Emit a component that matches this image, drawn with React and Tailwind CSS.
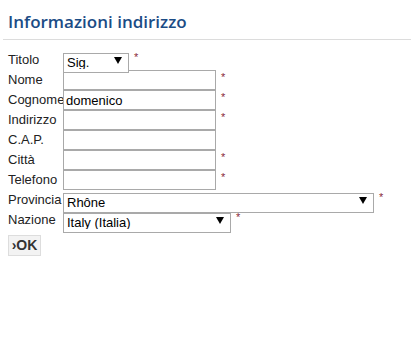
import { useState } from "react";

const inputCls =
  "h-5 w-[153px] border border-[#a9a9a9] bg-white px-[2px] text-[13px] text-black outline-none";

function Star() {
  return (
    <span className="ml-[5px] self-start pt-[2px] text-[11px] leading-none text-[#8a2a3a]">
      *
    </span>
  );
}

function Arrow() {
  return (
    <svg
      width="8"
      height="7"
      viewBox="0 0 8 7"
      className="pointer-events-none absolute right-[7px] top-[7px]"
    >
      <path d="M0 0H8L4 7Z" fill="#000" />
    </svg>
  );
}

function SelectBox({ width, value }) {
  return (
    <div className={`relative h-5 ${width}`}>
      <select
        defaultValue={value}
        className="h-5 w-full appearance-none border border-[#a9a9a9] bg-white pb-[1px] pl-[3px] text-[13px] leading-none text-black outline-none"
      >
        <option>{value}</option>
      </select>
      <Arrow />
    </div>
  );
}

function Row({ label, children, star }) {
  return (
    <div className="flex h-5 items-center">
      <div className="w-[55px] shrink-0 whitespace-nowrap text-[13px] text-[#222]">
        {label}
      </div>
      <div className="flex items-center">
        {children}
        {star && <Star />}
      </div>
    </div>
  );
}

export default function App() {
  const [cognome, setCognome] = useState("domenico");

  return (
    <div
      className="h-[341px] w-[411px] bg-white"
      style={{ fontFamily: '"Liberation Sans", Arial, sans-serif' }}
    >
      {/* Header */}
      <div className="ml-[3px] border-b border-[#dcdcdc] pb-[6px] pl-[5px] pt-[10px]">
        <h1
          className="text-[17px] font-semibold leading-[23px] text-[#1b4c85]"
          style={{ fontFamily: '"Open Sans", sans-serif' }}
        >
          Informazioni indirizzo
        </h1>
      </div>

      {/* Form */}
      <form className="flex flex-col pl-[8px] pt-[10px]">
        <Row label="Titolo" star>
          <SelectBox width="w-[66px]" value="Sig." />
        </Row>
        <Row label="Nome" star>
          <input className={inputCls} />
        </Row>
        <Row label="Cognome" star>
          <input
            className={inputCls}
            value={cognome}
            onChange={(e) => setCognome(e.target.value)}
          />
        </Row>
        <Row label="Indirizzo" star>
          <input className={inputCls} />
        </Row>
        <Row label="C.A.P.">
          <input className={inputCls} />
        </Row>
        <Row label="Città" star>
          <input className={inputCls} />
        </Row>
        <Row label="Telefono" star>
          <input className={inputCls} />
        </Row>
        <Row label="Provincia" star>
          <SelectBox width="w-[311px]" value="Rhône" />
        </Row>
        <Row label="Nazione" star>
          <SelectBox width="w-[168px]" value="Italy (Italia)" />
        </Row>
        <div className="pt-[3px]">
          <button
            type="button"
            className="h-[21px] w-[33px] border border-[#dddddd] bg-[#f3f3f3] text-[14px] font-bold leading-none text-[#333]"
          >
            ›OK
          </button>
        </div>
      </form>
    </div>
  );
}
